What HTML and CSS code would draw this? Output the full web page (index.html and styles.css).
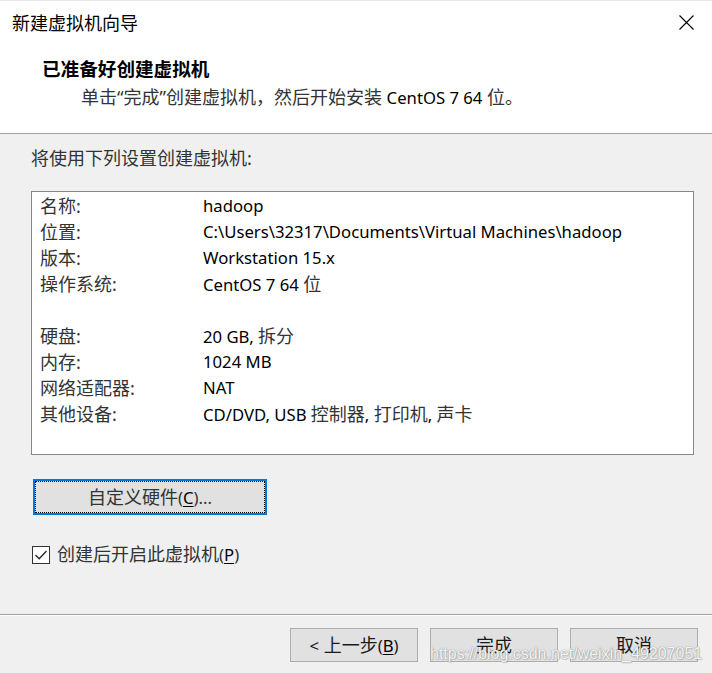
FILE: index.html
```html
<!DOCTYPE html>
<html lang="zh-CN">
<head>
<meta charset="utf-8">
<title>新建虚拟机向导</title>
<link rel="stylesheet" href="styles.css">
</head>
<body>
<div class="window">
  <header class="header">
    <div class="titlebar">
      <span class="title">新建虚拟机向导</span>
      <svg class="close" width="15" height="15" viewBox="0 0 15 15"><path d="M0.5 0.5 L14.5 14.5 M14.5 0.5 L0.5 14.5" stroke="#000" stroke-width="1.1" fill="none"/></svg>
    </div>
    <div class="heading">已准备好创建虚拟机</div>
    <div class="subtitle">单击“完成”创建虚拟机，然后开始安装 <span class="en">CentOS 7 64</span> 位。</div>
  </header>
  <main class="content">
    <div class="intro">将使用下列设置创建虚拟机:</div>
    <div class="listbox">
      <div class="row"><span class="label">名称:</span><span class="value">hadoop</span></div>
      <div class="row"><span class="label">位置:</span><span class="value">C:\Users\32317\Documents\Virtual Machines\hadoop</span></div>
      <div class="row"><span class="label">版本:</span><span class="value">Workstation 15.x</span></div>
      <div class="row"><span class="label">操作系统:</span><span class="value">CentOS 7 64 <span class="zh">位</span></span></div>
      <div class="row"></div>
      <div class="row"><span class="label">硬盘:</span><span class="value">20 GB, <span class="zh">拆分</span></span></div>
      <div class="row"><span class="label">内存:</span><span class="value">1024 MB</span></div>
      <div class="row"><span class="label">网络适配器:</span><span class="value">NAT</span></div>
      <div class="row"><span class="label">其他设备:</span><span class="value">CD/DVD, USB <span class="zh">控制器</span>, <span class="zh">打印机</span>, <span class="zh">声卡</span></span></div>
    </div>
    <button class="btn btn-default">自定义硬件<span class="en">(<u>C</u>)...</span></button>
    <label class="check">
      <svg class="checkbox" width="18" height="18" viewBox="0 0 18 18"><rect x="0.5" y="0.5" width="17" height="17" fill="#fff" stroke="#333" stroke-width="1"/><path d="M3.5 9 L7.2 12.8 L14.5 5" stroke="#222" stroke-width="1.3" fill="none"/></svg>
      <span>创建后开启此虚拟机<span class="en">(<u>P</u>)</span></span>
    </label>
  </main>
  <footer class="footer">
    <button class="btn btn-foot"><span class="en">&lt;</span> 上一步<span class="en">(<u>B</u>)</span></button>
    <button class="btn btn-foot">完成</button>
    <button class="btn btn-foot">取消</button>
  </footer>
  <div class="watermark">https://blog.csdn.net/weixin_49207051</div>
</div>
</body>
</html>
```
FILE: styles.css
```css
html, body {
  margin: 0;
  padding: 0;
}
body {
  width: 712px;
  height: 673px;
  overflow: hidden;
  background: #f0f0f0;
  font-family: "Noto Sans", "Noto Sans CJK SC", sans-serif;
  font-size: 18px;
  color: #1a1a1a;
}
.en {
  font-size: 16.7px;
}
.zh {
  font-size: 18px;
}
.window {
  position: relative;
  width: 712px;
  height: 673px;
  display: flex;
  flex-direction: column;
  box-sizing: border-box;
  border-top: 1px solid #e6e6e6;
}
.header {
  background: #fff;
  height: 132px;
  border-bottom: 1px solid #a0a0a0;
  display: flex;
  flex-direction: column;
}
.titlebar {
  height: 43px;
  display: flex;
  align-items: center;
  justify-content: space-between;
  padding: 0 18px 0 12px;
}
.title {
  font-size: 18px;
  line-height: 24px;
  color: #000;
}
.close {
  display: block;
}
.heading {
  margin: 12px 0 0 42px;
  font-family: "Noto Sans CJK SC", sans-serif;
  font-weight: 700;
  font-size: 18.6px;
  line-height: 24px;
  color: #000;
}
.subtitle {
  margin: 5px 0 0 81px;
  line-height: 24px;
  color: #333;
}
.subtitle .en {
  color: #000;
}
.content {
  flex: 1;
  padding: 12px 0 0 31px;
  display: flex;
  flex-direction: column;
  align-items: flex-start;
}
.intro {
  line-height: 24px;
  color: #333;
}
.listbox {
  margin-top: 21px;
  width: 663px;
  height: 264px;
  box-sizing: border-box;
  border: 1px solid #828790;
  background: #fff;
  padding: 1px 0 0 8px;
}
.row {
  height: 26px;
  display: flex;
  align-items: center;
  line-height: 24px;
}
.label {
  width: 163px;
  color: #333;
}
.value {
  color: #000;
  font-size: 16.7px;
}
.value .zh {
  color: #333;
}
.btn {
  font-family: "Noto Sans", "Noto Sans CJK SC", sans-serif;
  font-size: 18px;
  line-height: 24px;
  color: #1a1a1a;
  background: #e1e1e1;
  border: 1px solid #adadad;
  padding: 0;
  margin: 0;
  box-sizing: border-box;
}
.btn u,
.check u {
  text-underline-offset: 2px;
  color: #000;
}
.btn-default {
  margin: 24px 0 0 2px;
  width: 234px;
  height: 36px;
  border: 2px solid #0078d7;
  outline: 1px dotted #000;
  outline-offset: -3px;
  color: #333;
}
.check {
  margin-top: 27px;
  display: flex;
  align-items: center;
  gap: 7px;
  line-height: 24px;
  color: #333;
}
.checkbox {
  display: block;
  margin-left: 1px;
}
.footer {
  height: 59px;
  box-sizing: border-box;
  border-top: 1px solid #a0a0a0;
  box-shadow: inset 0 1px 0 #fff;
  display: flex;
  justify-content: flex-end;
  align-items: flex-start;
  gap: 12px;
  padding: 13px 14px 0 0;
}
.btn-foot {
  width: 128px;
  height: 34px;
}
.watermark {
  position: absolute;
  left: 430px;
  top: 643px;
  font-family: "Liberation Sans", Arial, sans-serif;
  font-size: 16px;
  line-height: 20px;
  color: rgba(255, 255, 255, 0.9);
  text-shadow: 0 0 1px #9a9a9a, 0 0 1px #9a9a9a, 1px 1px 1px rgba(0,0,0,0.15);
  white-space: nowrap;
}
```
